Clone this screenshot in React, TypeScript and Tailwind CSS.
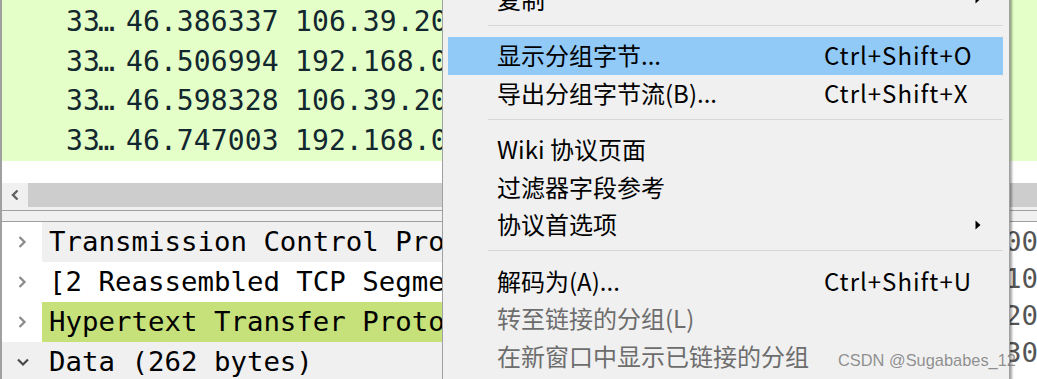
import React from "react";

type Item =
  | { sep: true }
  | { sep?: false; label: string; shortcut?: string; arrow?: boolean; active?: boolean; disabled?: boolean };

const menu: Item[] = [
  { label: "复制", arrow: true },
  { sep: true },
  { label: "显示分组字节...", shortcut: "Ctrl+Shift+O", active: true },
  { label: "导出分组字节流(B)...", shortcut: "Ctrl+Shift+X" },
  { sep: true },
  { label: "Wiki 协议页面" },
  { label: "过滤器字段参考" },
  { label: "协议首选项", arrow: true },
  { sep: true },
  { label: "解码为(A)...", shortcut: "Ctrl+Shift+U" },
  { label: "转至链接的分组(L)", disabled: true },
  { label: "在新窗口中显示已链接的分组", disabled: true },
];

const packets = [
  ["33", "46.262714", "192.168.0.105"],
  ["33", "46.386337", "106.39.200.120"],
  ["33", "46.506994", "192.168.0.105"],
  ["33", "46.598328", "106.39.200.120"],
  ["33", "46.747003", "192.168.0.105"],
];

const tree = [
  { text: "Transmission Control Protocol, Src Port: 80", bg: "bg-[#f0f0f0]", open: false },
  { text: "[2 Reassembled TCP Segments (1722 bytes)]", bg: "bg-white", open: false },
  { text: "Hypertext Transfer Protocol", bg: "bg-[#c6e07a]", open: false },
  { text: "Data (262 bytes)", bg: "bg-[#f0f0f0]", open: true },
];

function Chevron({ open }: { open: boolean }) {
  if (open)
    return (
      <svg width="14" height="10" viewBox="0 0 14 10" className="ml-[14px]">
        <path d="M2 2.5 L7 7.5 L12 2.5" fill="none" stroke="#4a4a4a" strokeWidth="2.2" />
      </svg>
    );
  return (
    <svg width="10" height="14" viewBox="0 0 10 14" className="ml-[15px]">
      <path d="M2.5 2 L7.5 7 L2.5 12" fill="none" stroke="#8a8a8a" strokeWidth="2.2" />
    </svg>
  );
}

export default function App() {
  return (
    <div className="relative w-[1037px] h-[379px] overflow-hidden bg-white">
      <div className="flex flex-col h-full border-l-2 border-[#a0a0a0]">
        {/* packet list */}
        <div className="h-[183px] shrink-0 overflow-hidden bg-white">
          <div className="mt-[-37px] bg-[#e4ffc7] text-[#12272e] font-['DejaVu_Sans_Mono',monospace] text-[28px] tracking-[0.1px]">
            {packets.map((p, i) => (
              <div key={i} className="flex items-center h-[39.5px] whitespace-pre pl-[64px]">
                <span className="w-[60px] shrink-0 flex items-center">
                  <span>{p[0]}</span>
                  <span className="tracking-[-2px] ml-[-2px]">…</span>
                </span>
                <span className="w-[169px] shrink-0">{p[1]}</span>
                <span>{p[2]}</span>
              </div>
            ))}
          </div>
        </div>
        {/* horizontal scrollbar */}
        <div className="flex h-[24px] shrink-0">
          <div className="w-[26px] bg-[#f0f0f0] flex items-center justify-center">
            <svg width="10" height="12" viewBox="0 0 10 12">
              <path d="M7.5 1.5 L3 6 L7.5 10.5" fill="none" stroke="#606060" strokeWidth="2.4" />
            </svg>
          </div>
          <div className="flex-1 bg-[#cdcdcd]" />
        </div>
        <div className="h-[3px] shrink-0 bg-[#f0f0f0]" />
        <div className="h-px shrink-0 bg-[#a0a0a0]" />
        <div className="h-[10px] shrink-0 bg-[#f0f0f0]" />
        <div className="h-px shrink-0 bg-[#a0a0a0]" />
        {/* details + bytes */}
        <div className="flex flex-1 overflow-hidden">
          <div className="flex-1 overflow-hidden bg-white font-['DejaVu_Sans_Mono',monospace] text-[27.4px] text-black">
            {tree.map((t, i) => (
              <div key={i} className={`flex h-[40px] ${t.open ? "bg-[#f0f0f0]" : ""}`}>
                <div className="w-[40px] shrink-0 flex items-center">
                  <Chevron open={t.open} />
                </div>
                <div className={`flex-1 flex items-center pl-[7px] whitespace-pre ${t.bg}`}>{t.text}</div>
              </div>
            ))}
          </div>
          <div className="w-[65px] shrink-0 overflow-hidden bg-white font-['DejaVu_Sans_Mono',monospace] text-[27.4px] text-[#555555] pt-[1px]">
            {["0000", "0010", "0020", "0030", "0040"].map((o) => (
              <div key={o} className="h-[37px] flex items-center whitespace-pre">
                {o}
              </div>
            ))}
          </div>
        </div>
      </div>

      {/* context menu */}
      <div className="absolute left-[442px] top-[-24px] w-[568px] border border-[#a0a0a0] bg-[#f0f0f0] pl-[5px] pr-[6px] pt-[3.5px] pb-[4px] shadow-[2px_2px_2px_rgba(0,0,0,0.35)] font-['Noto_Sans_CJK_SC','Microsoft_YaHei',sans-serif] text-[24px] leading-none">
        {menu.map((m, i) =>
          m.sep ? (
            <div key={i} className="h-[19px] pt-[6.5px] pl-[40px]">
              <div className="h-px bg-[#d7d7d7]" />
            </div>
          ) : (
            <div
              key={i}
              className={`flex items-center h-[37.5px] ${m.active ? "bg-[#91c9f7]" : ""} ${
                m.disabled ? "text-[#6d6d6d]" : "text-black"
              }`}
            >
              <span className="relative top-[-0.5px] pl-[49px] w-[376px] shrink-0 whitespace-nowrap">{m.label}</span>
              {m.shortcut && (
                <span className="relative top-[-0.5px] whitespace-nowrap tracking-[1px]">{m.shortcut}</span>
              )}
              {m.arrow && (
                <svg width="6" height="10" viewBox="0 0 6 10" className="ml-auto mr-[22px]">
                  <path d="M0.5 0.5 L5.5 5 L0.5 9.5Z" fill="#000" />
                </svg>
              )}
            </div>
          )
        )}
      </div>

      {/* watermark */}
      <div className="absolute left-[838px] top-[350px] font-['Liberation_Sans',Arial,sans-serif] text-[16.4px] leading-[20px] text-[rgba(110,110,110,0.75)] whitespace-nowrap">
        CSDN @Sugababes_12
      </div>
    </div>
  );
}
